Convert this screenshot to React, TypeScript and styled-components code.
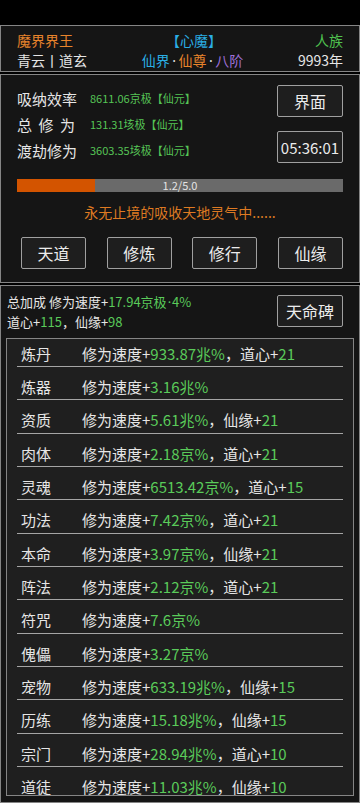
import styled, { createGlobalStyle } from 'styled-components'

const GlobalStyle = createGlobalStyle`
  html, body { margin: 0; padding: 0; background: #000; }
  body { font-family: "Noto Sans CJK SC", "Noto Sans", sans-serif; color: #e6e6e6; }
  * { box-sizing: border-box; }
`

const Page = styled.div`
  width: 360px;
  height: 803px;
  padding-top: 25px;
  display: flex;
  flex-direction: column;
  gap: 2px;
  overflow: hidden;
`

const Panel = styled.section`
  border: 1px solid #858585;
  background: #151515;
`

const Header = styled(Panel)`
  height: 47px;
  padding: 4px 16px 0;
`

const HeadRow = styled.div`
  display: flex;
  justify-content: space-between;
  font-size: 14px;
  line-height: 20px;
`

const Tint = styled.span<{ $c: string }>`
  color: ${p => p.$c};
`

// the CJK font draws a full-width middle dot, the reference has a narrow one
const Dot = styled.span<{ $gap?: number }>`
  font-family: "Noto Sans", "DejaVu Sans", sans-serif;
  margin: 0 ${p => p.$gap ?? 1}px;
`

const Main = styled(Panel)`
  height: 209px;
  padding: 10px 16px 0;
`

const TopRow = styled.div`
  display: flex;
  justify-content: space-between;
  height: 78px;
`

const Stats = styled.div`
  display: flex;
  flex-direction: column;
`

const StatRow = styled.div`
  display: flex;
  align-items: center;
  height: 26px;
`

const StatLabel = styled.div`
  width: 58px;
  display: flex;
  justify-content: space-between;
  font-size: 15px;
  margin-right: 15px;
`

const StatValue = styled.div`
  font-size: 11px;
  color: #55c455;
`

const SideButtons = styled.div`
  display: flex;
  flex-direction: column;
  justify-content: space-between;
`

const Button = styled.button<{ $w?: number; $fs?: number }>`
  width: ${p => p.$w ?? 66}px;
  height: 32px;
  background: #1e1e1e;
  border: 1px solid #a0a0a0;
  border-radius: 2px;
  color: #ececec;
  font-family: inherit;
  font-size: ${p => p.$fs ?? 16}px;
  padding: 0;
  display: flex;
  align-items: center;
  justify-content: center;
`

const Bar = styled.div`
  position: relative;
  margin-top: 16px;
  height: 13px;
  background: #6a6a6a;
`

const BarFill = styled.div`
  height: 100%;
  background: #d35400;
`

const BarText = styled.div`
  position: absolute;
  inset: 0;
  text-align: center;
  font-size: 11px;
  line-height: 13px;
  color: #e4e4e4;
`

const Status = styled.div`
  margin-top: 10px;
  text-align: center;
  font-size: 14px;
  line-height: 20px;
  color: #de7a22;
`

const ActionRow = styled.div`
  margin-top: 15px;
  padding-left: 4px;
  display: flex;
  justify-content: space-between;
`

const Bonus = styled(Panel)`
  flex: 1;
  padding: 6px 5px 0;
`

const BonusTop = styled.div`
  display: flex;
  justify-content: space-between;
  align-items: center;
  padding: 0 11px 0 1px;
  height: 38px;
`

const BonusText = styled.div`
  font-size: 13px;
  line-height: 19px;
`

const Green = styled.span`
  color: #5acb5a;
`

const ListBox = styled.div`
  margin-top: 8px;
  height: 458px;
  border: 1px solid #858585;
  background: #1f1f1f;
  overflow: hidden;
  padding: 0 10px;
`

const ListInner = styled.div`
  margin-top: -5.3px;
`

const Row = styled.div`
  height: 33.33px;
  border-bottom: 1px solid #a5a5a5;
  display: flex;
  align-items: flex-start;
  padding: 10px 0 0 4px;
  font-size: 15px;
  line-height: 20px;
`

const RowLabel = styled.div`
  width: 61px;
  color: #e6e6e6;
`

const RowValue = styled.div`
  color: #e6e6e6;
`

const stats = [
  { label: '吸纳效率', value: '8611.06京极【仙元】' },
  { label: '总修为', value: '131.31垓极【仙元】' },
  { label: '渡劫修为', value: '3603.35垓极【仙元】' },
]

const rows: [string, string, string?, string?][] = [
  ['炼丹', '933.87兆%', '道心', '21'],
  ['炼器', '3.16兆%'],
  ['资质', '5.61兆%', '仙缘', '21'],
  ['肉体', '2.18京%', '道心', '21'],
  ['灵魂', '6513.42京%', '道心', '15'],
  ['功法', '7.42京%', '道心', '21'],
  ['本命', '3.97京%', '仙缘', '21'],
  ['阵法', '2.12京%', '道心', '21'],
  ['符咒', '7.6京%'],
  ['傀儡', '3.27京%'],
  ['宠物', '633.19兆%', '仙缘', '15'],
  ['历练', '15.18兆%', '仙缘', '15'],
  ['宗门', '28.94兆%', '道心', '10'],
  ['道徒', '11.03兆%', '仙缘', '10'],
]

export default function App() {
  const progress = 1.2
  const max = 5.0

  return (
    <>
      <GlobalStyle />
      <Page>
        <Header>
          <HeadRow>
            <Tint $c="#e8842c">魔界界王</Tint>
            <Tint $c="#2aaee4">【心魔】</Tint>
            <Tint $c="#4fc24f">人族</Tint>
          </HeadRow>
          <HeadRow>
            <span>青云丨道玄</span>
            <span>
              <Tint $c="#2aaee4">仙界</Tint><Dot $gap={2.5}>·</Dot><Tint $c="#e8842c">仙尊</Tint><Dot $gap={2.5}>·</Dot><Tint $c="#9d6fd8">八阶</Tint>
            </span>
            <span>9993年</span>
          </HeadRow>
        </Header>

        <Main>
          <TopRow>
            <Stats>
              {stats.map(s => (
                <StatRow key={s.label}>
                  <StatLabel>
                    {s.label.split('').map((ch, i) => <span key={i}>{ch}</span>)}
                  </StatLabel>
                  <StatValue>{s.value}</StatValue>
                </StatRow>
              ))}
            </Stats>
            <SideButtons>
              <Button>界面</Button>
              <Button $fs={15}>05:36:01</Button>
            </SideButtons>
          </TopRow>

          <Bar>
            <BarFill style={{ width: `${(progress / max) * 100}%` }} />
            <BarText>{progress.toFixed(1)}/{max.toFixed(1)}</BarText>
          </Bar>

          <Status>永无止境的吸收天地灵气中......</Status>

          <ActionRow>
            <Button $w={65}>天道</Button>
            <Button $w={65}>修炼</Button>
            <Button $w={65}>修行</Button>
            <Button $w={65}>仙缘</Button>
          </ActionRow>
        </Main>

        <Bonus>
          <BonusTop>
            <BonusText>
              <div>总加成 修为速度+<Green>17.94京极<Dot>·</Dot>4%</Green></div>
              <div>道心+<Green>115</Green>，仙缘+<Green>98</Green></div>
            </BonusText>
            <Button>天命碑</Button>
          </BonusTop>

          <ListBox>
            <ListInner>
              {rows.map(([label, speed, extra, n]) => (
                <Row key={label}>
                  <RowLabel>{label}</RowLabel>
                  <RowValue>
                    修为速度+<Green>{speed}</Green>
                    {extra && <>，{extra}+<Green>{n}</Green></>}
                  </RowValue>
                </Row>
              ))}
            </ListInner>
          </ListBox>
        </Bonus>
      </Page>
    </>
  )
}
